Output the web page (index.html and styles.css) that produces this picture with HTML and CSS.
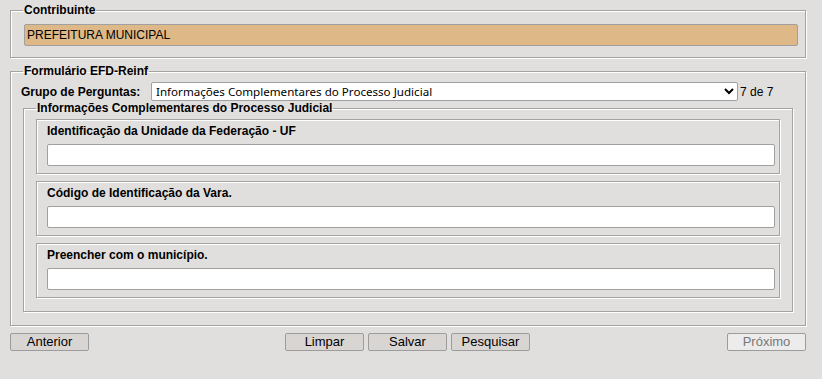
FILE: index.html
```html
<!DOCTYPE html>
<html lang="pt-BR">
<head>
    <meta charset="utf-8"/>
    <meta content="width=device-width, initial-scale=1.0" name="viewport"/>
    <title>Formulário EFD-Reinf</title>
    <link rel="stylesheet" href="styles.css">
</head>
<body>
    <div class="page">
        <fieldset class="group contribuinte">
            <legend>Contribuinte</legend>
            <input class="readonly" type="text" value="PREFEITURA MUNICIPAL" readonly>
        </fieldset>

        <fieldset class="group formulario">
            <legend>Formulário EFD-Reinf</legend>
            <div class="grupo-row">
                <label class="grupo-label" for="grupo">Grupo de Perguntas:</label>
                <select id="grupo" class="grupo-select">
                    <option>Informações Complementares do Processo Judicial</option>
                </select>
                <span class="contador">7 de 7</span>
            </div>

            <fieldset class="group perguntas">
                <legend>Informações Complementares do Processo Judicial</legend>
                <div class="question">
                    <div class="q-label">Identificação da Unidade da Federação - UF</div>
                    <input class="q-input" type="text">
                </div>
                <div class="question">
                    <div class="q-label">Código de Identificação da Vara.</div>
                    <input class="q-input" type="text">
                </div>
                <div class="question">
                    <div class="q-label">Preencher com o município.</div>
                    <input class="q-input" type="text">
                </div>
            </fieldset>
        </fieldset>

        <div class="actions">
            <button class="btn">Anterior</button>
            <div class="middle">
                <button class="btn">Limpar</button>
                <button class="btn">Salvar</button>
                <button class="btn">Pesquisar</button>
            </div>
            <button class="btn" disabled>Próximo</button>
        </div>
    </div>
</body>
</html>
```

FILE: styles.css
```css
body {
    margin: 0;
    padding: 0;
    background-color: #e0dfdd;
    font-family: "Liberation Sans", Arial, sans-serif;
    font-size: 12px;
    color: #000;
}
.page {
    width: 796px;
    margin-left: 10px;
    padding-top: 3px;
}
.group {
    margin: 0;
    padding: 0 12px;
    border: 1px solid #a3a3a3;
    box-shadow: inset 1px 1px 0 #fff, 1px 1px 0 #fff;
    min-width: 0;
}
.group legend {
    padding: 0 1px;
    font-weight: bold;
    font-size: 12px;
    line-height: 14px;
}
.contribuinte {
    padding-top: 7px;
    padding-bottom: 11px;
}
.readonly {
    display: block;
    box-sizing: border-box;
    width: 774px;
    height: 22px;
    margin: 0 0 0 1px;
    padding: 0 2px;
    border: 1px solid #a0a0a0;
    border-radius: 2px;
    background-color: #deb887;
    font-family: "Liberation Sans", Arial, sans-serif;
    font-size: 12px;
    color: #000;
}
.formulario {
    margin-top: 6px;
    padding-top: 4px;
    padding-bottom: 13px;
}
.grupo-row {
    display: flex;
    align-items: center;
    height: 19px;
}
.grupo-label {
    font-weight: bold;
    margin-left: -2px;
    width: 130px;
}
.grupo-select {
    box-sizing: border-box;
    width: 587px;
    height: 19px;
    padding: 0;
    border: 1px solid #a0a0a0;
    border-radius: 2px;
    background-color: #fff;
    font-family: "Noto Sans", sans-serif;
    font-size: 11.6px;
    color: #000;
}
.contador {
    margin-left: 2px;
}
.perguntas {
    padding-top: 4px;
    padding-bottom: 13px;
    display: flex;
    flex-direction: column;
    gap: 7px;
}
.question {
    box-sizing: border-box;
    height: 55px;
    padding: 4px 4px 0 10px;
    border: 1px solid #a3a3a3;
    box-shadow: inset 1px 1px 0 #fff, 1px 1px 0 #fff;
}
.q-label {
    font-weight: bold;
    line-height: 14px;
    margin-bottom: 6px;
}
.q-input {
    display: block;
    box-sizing: border-box;
    width: 728px;
    height: 22px;
    margin: 0;
    border: 1px solid #a0a0a0;
    border-radius: 2px;
    background-color: #fff;
}
.actions {
    display: flex;
    justify-content: space-between;
    margin-top: 7px;
}
.middle {
    display: flex;
    gap: 4px;
    margin-left: -1px;
}
.btn {
    box-sizing: border-box;
    width: 79px;
    height: 18px;
    padding: 0;
    border: 1px solid #9c9c9c;
    border-radius: 2px;
    background-color: #d8d5d3;
    font-family: "Liberation Sans", Arial, sans-serif;
    font-size: 13px;
    line-height: 16px;
    color: #000;
}
.btn:disabled {
    background-color: #ececec;
    color: #777;
}
```
